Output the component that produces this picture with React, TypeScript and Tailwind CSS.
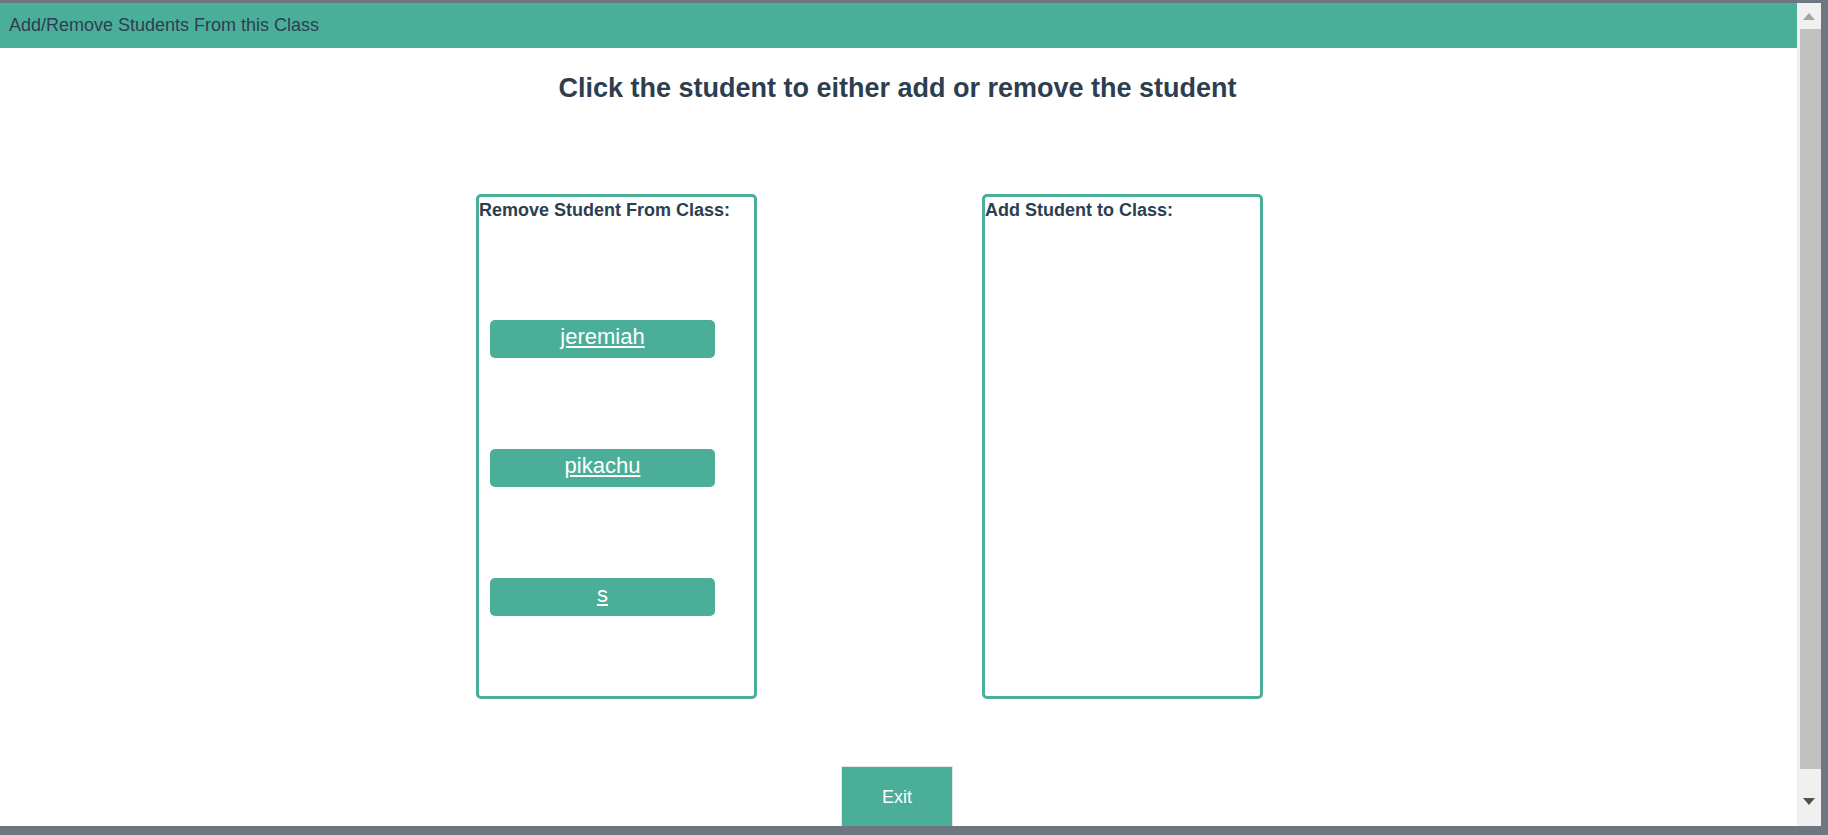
import React from "react";

const students = ["jeremiah", "pikachu", "s"];

export default function App() {
  return (
    <div
      className="w-[1828px] h-[835px] overflow-hidden bg-[#6f7681] pt-[3px] pr-[7px] pb-[9px]"
      style={{ fontFamily: '"Liberation Sans", Arial, sans-serif' }}
    >
      <div className="w-[1821px] h-[823px] bg-white flex flex-row overflow-hidden">
        {/* content */}
        <div className="w-[1797px] h-full flex flex-col overflow-hidden">
          <div className="h-[45px] shrink-0 bg-[#4bae99] flex items-center px-[9px]">
            <span className="text-[18px] leading-normal text-[#2c3e50]">
              Add/Remove Students From this Class
            </span>
          </div>
          <h1 className="mt-[20px] text-center text-[27px] font-bold leading-normal text-[#2c3e50] pr-[2px]">
            Click the student to either add or remove the student
          </h1>
          <div className="mt-[85px] flex flex-row pl-[476px] gap-[225px] shrink-0">
            <div className="w-[281px] h-[505px] border-[3px] border-[#4bae99] rounded-[5px] flex flex-col">
              <div className="text-[18px] font-bold leading-normal text-[#2c3e50]">
                Remove Student From Class:
              </div>
              <div className="flex flex-col gap-[91px] mt-[96px] ml-[11px]">
                {students.map((s) => (
                  <a
                    key={s}
                    href="#"
                    className="block w-[225px] h-[38px] rounded-[5px] bg-[#4bae99] text-white text-[22px] leading-normal text-center underline"
                  >
                    {s}
                  </a>
                ))}
              </div>
            </div>
            <div className="w-[281px] h-[505px] border-[3px] border-[#4bae99] rounded-[5px] flex flex-col">
              <div className="text-[18px] font-bold leading-normal text-[#2c3e50]">
                Add Student to Class:
              </div>
            </div>
          </div>
          <div className="flex justify-center mt-[67px] shrink-0 pr-[3px]">
            <button className="w-[112px] h-[70px] bg-[#4bae99] border border-[#e4e4e4] text-white text-[18px] leading-normal pt-[17px] flex justify-center items-start">
              Exit
            </button>
          </div>
        </div>
        {/* scrollbar */}
        <div className="w-[24px] h-full bg-[#f0f0f0] flex flex-col items-center">
          <div className="h-[26px] w-full flex items-center justify-center">
            <svg width="12" height="7" viewBox="0 0 12 7">
              <polygon points="6,0 12,7 0,7" fill="#a3a3a3" />
            </svg>
          </div>
          <div className="w-[21px] ml-[2px] h-[740px] bg-[#c1c1c1]" />
          <div className="flex-1 w-full flex items-center justify-center pt-[8px]">
            <svg width="12" height="7" viewBox="0 0 12 7">
              <polygon points="0,0 12,0 6,7" fill="#505050" />
            </svg>
          </div>
        </div>
      </div>
    </div>
  );
}
